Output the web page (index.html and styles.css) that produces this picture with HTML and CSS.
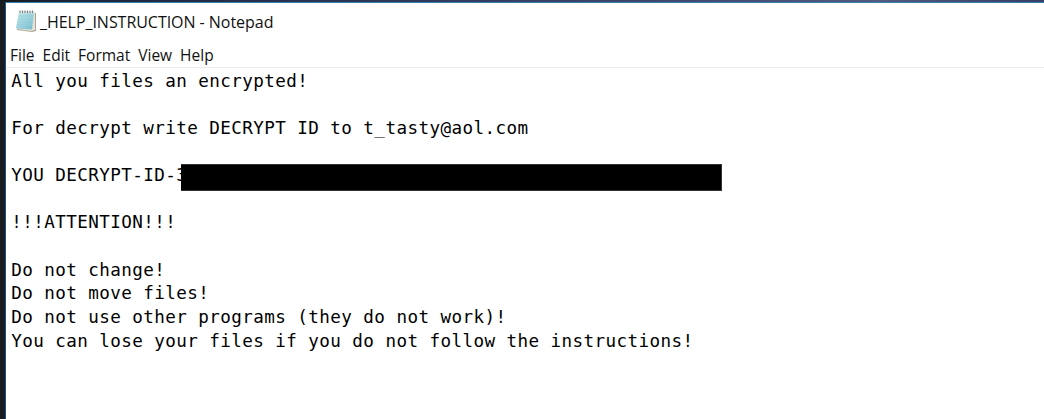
FILE: index.html
```html
<!DOCTYPE html>
<html lang="en">
<head>
<meta charset="utf-8">
<title>_HELP_INSTRUCTION - Notepad</title>
<link rel="stylesheet" href="styles.css">
</head>
<body>
<main class="window">
  <header class="titlebar">
    <svg class="app-icon" width="23" height="24" viewBox="0 0 23 24">
      <defs>
        <linearGradient id="sheet" x1="0" y1="0" x2="1" y2="1">
          <stop offset="0" stop-color="#c4e6ea"/>
          <stop offset=".5" stop-color="#a0d5df"/>
          <stop offset="1" stop-color="#70b9cc"/>
        </linearGradient>
      </defs>
      <path d="M5 3L21 4L21 22L17 23L2 21Z" fill="#aaa596"/>
      <path d="M5 3L20 3L20 21L16 22L2 20Z" fill="#e5e3d5"/>
      <path d="M4 3L19 3L17 20.5L.8 19.5Z" fill="url(#sheet)"/>
      <path d="M3.5 7H18M3 10H18M2.5 13H17.5M2 16H17" stroke="#8fcbd6" stroke-width=".6"/>
      <path d="M4 3.3H19" stroke="#dce8e6" stroke-width="2"/>
      <path d="M5 1.5V4M7.5 1.5V4M10 1.5V4M12.5 1.5V4M15 1.5V4M17.5 1.5V4" stroke="#77817f" stroke-width="1.1"/>
    </svg>
    <h1 class="title">_HELP_INSTRUCTION - Notepad</h1>
  </header>
  <nav class="menu">
    <span>File</span><span>Edit</span><span>Format</span><span>View</span><span>Help</span>
  </nav>
  <section class="document">
    <p>All you files an encrypted!</p>
    <p></p>
    <p>For decrypt write DECRYPT ID to t_tasty@aol.com</p>
    <p></p>
    <p class="id-line">YOU DECRYPT-ID-3<span class="redaction"></span></p>
    <p></p>
    <p>!!!ATTENTION!!!</p>
    <p></p>
    <p>Do not change!</p>
    <p>Do not move files!</p>
    <p>Do not use other programs (they do not work)!</p>
    <p>You can lose your files if you do not follow the instructions!</p>
  </section>
</main>
</body>
</html>
```
FILE: styles.css
```css
* { box-sizing: border-box; }

body {
  margin: 0;
  height: 419px;
  padding: 2px 0 0 5px;
  overflow: hidden;
  background: linear-gradient(90deg, #15191f 0, #1d2538 60px, #2b3557 350px, #414b73 700px, #515b82 880px, #353e66 1044px) top / 100% 2px no-repeat, #191b1e;
  color: #111;
}

.window {
  height: 417px;
  background: #fff;
  border-top: 1px solid #397fa8;
  border-left: 1px solid #17578d;
}

.titlebar {
  display: flex;
  height: 39px;
  padding: 6px 0 0 9px;
}

.app-icon { flex: none; }

.title {
  margin: 1px 0 0 2px;
  font: 400 16px/24px "Open Sans", sans-serif;
  letter-spacing: -.04px;
  white-space: nowrap;
}

.menu {
  display: flex;
  gap: 8px;
  height: 26px;
  padding-left: 4px;
  border-bottom: 1px solid #e9ebed;
  font: 400 15.5px/27px "Open Sans", sans-serif;
}

.document {
  padding: 1.6px 0 0 5.3px;
  font: 17.6px/23.65px "DejaVu Sans Mono", monospace;
  letter-spacing: .41px;
  color: #000;
}

.document p {
  height: 23.65px;
  margin: 0;
  white-space: nowrap;
}

.id-line { position: relative; }

.redaction {
  position: absolute;
  left: 170px;
  top: -.3px;
  width: 541px;
  height: 27px;
  background: #000;
  border: 1px solid #333;
  border-left: 0;
}
```
